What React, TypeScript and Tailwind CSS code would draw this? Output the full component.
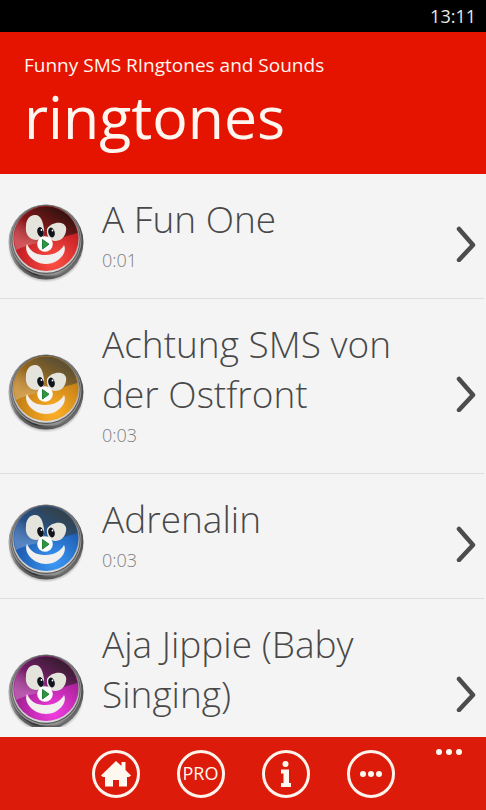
import React from 'react';

interface Ringtone {
  title: string;
  duration?: string;
  face: string;
  glow: string;
  shade: string;
}

const ringtones: Ringtone[] = [
  { title: 'A Fun One', duration: '0:01', face: '#c01a22', glow: '#ff5044', shade: '#35130f' },
  { title: 'Achtung SMS von der Ostfront', duration: '0:03', face: '#c07c14', glow: '#ffb128', shade: '#5a4f34' },
  { title: 'Adrenalin', duration: '0:03', face: '#1c58ac', glow: '#3c9af8', shade: '#34424a' },
  { title: 'Aja Jippie (Baby Singing)', face: '#a02090', glow: '#f53ce4', shade: '#381c30' },
];

interface FaceIconProps {
  id: string;
  tone: Ringtone;
}

const FaceIcon: React.FC<FaceIconProps> = ({ id, tone }) => (
  <svg viewBox="0 1 80 80" className="size-20" aria-hidden="true">
    <defs>
      <linearGradient id={`${id}-rim`} x1="0" y1="0" x2="1" y2="1">
        <stop offset="0" stopColor="#8c8c8c" />
        <stop offset="0.3" stopColor="#a8a8a8" />
        <stop offset="0.5" stopColor="#686868" />
        <stop offset="0.75" stopColor="#505050" />
        <stop offset="1" stopColor="#a0a0a0" />
      </linearGradient>
      <linearGradient id={`${id}-groove`} x1="0" y1="0" x2="1" y2="0">
        <stop offset="0" stopColor="#6c6c6c" />
        <stop offset="0.35" stopColor="#2c2c2c" />
        <stop offset="0.65" stopColor="#8c8c8c" />
        <stop offset="1" stopColor="#4a4a4a" />
      </linearGradient>
      <linearGradient id={`${id}-ring`} x1="0" y1="0" x2="0" y2="1">
        <stop offset="0" stopColor="#5a5a5a" />
        <stop offset="0.5" stopColor="#a4a4a4" />
        <stop offset="1" stopColor="#dcdcdc" />
      </linearGradient>
      <linearGradient id={`${id}-gloss`} x1="0.1" y1="0.8" x2="0.7" y2="0.1">
        <stop offset="0" stopColor="#ffffff" stopOpacity="0.25" />
        <stop offset="0.45" stopColor={tone.shade} stopOpacity="0.4" />
        <stop offset="1" stopColor={tone.shade} />
      </linearGradient>
      <radialGradient id={`${id}-face`} cx="0.62" cy="0.86" r="0.6">
        <stop offset="0" stopColor={tone.glow} />
        <stop offset="1" stopColor={tone.face} />
      </radialGradient>
      <radialGradient id={`${id}-shadow`}>
        <stop offset="0.8" stopColor="#000000" stopOpacity="0.5" />
        <stop offset="1" stopColor="#000000" stopOpacity="0" />
      </radialGradient>
      <clipPath id={`${id}-clip`}>
        <circle cx="38" cy="35.500" r="32" />
      </clipPath>
    </defs>
    <ellipse cx="38" cy="44" rx="38" ry="35.500" fill={`url(#${id}-shadow)`} />
    <circle cx="38" cy="39" r="37.500" fill={`url(#${id}-rim)`} />
    <circle cx="38" cy="38" r="36" fill={`url(#${id}-groove)`} />
    <circle cx="38" cy="37" r="35.500" fill="#949494" />
    <circle cx="38" cy="36.500" r="34.500" fill="#555555" />
    <circle cx="38" cy="36" r="33.800" fill={`url(#${id}-ring)`} />
    <circle cx="38" cy="35.500" r="32.500" fill={`url(#${id}-face)`} />
    <path
      d="M5 3h66v26C62 33 44 37 30 40C20 42 11 45 5 49Z"
      fill={`url(#${id}-gloss)`}
      clipPath={`url(#${id}-clip)`}
    />
    <path
      d="M26 12C33 11 35 19 36 26C37 33 34 37 28 37C20 36 17 30 18 23C18 17 21 13 26 12Z"
      fill="#e4e4dc"
    />
    <path d="M39 26C42 21 48 19 53 20C57 21 59 24 58 28C57 34 53 38 47 38C42 38 38 33 39 26Z" fill="#e4e4dc" />
    <path d="M19 41C23 50 30 52 38 52S53 48 56 42C60 50 50 61 38 61C25 61 15 49 19 41Z" fill="#f2f0ee" />
    <ellipse cx="32.500" cy="29" rx="3.200" ry="5" fill="#10141c" transform="rotate(-15 32.500 29)" />
    <ellipse cx="43.500" cy="29.500" rx="3.200" ry="5" fill="#10141c" transform="rotate(-15 43.500 29.500)" />
    <circle cx="33.500" cy="27" r="0.900" fill="#ffffff" />
    <circle cx="44.500" cy="27.500" r="0.900" fill="#ffffff" />
    <circle cx="37" cy="41" r="7.800" fill="#ffffff" />
    <path d="M34.500 36.500v9.500l6.500-4.800Z" fill="#2c9640" stroke="#24803a" strokeLinejoin="round" />
  </svg>
);

interface RingtoneRowProps {
  id: string;
  tone: Ringtone;
}

const RingtoneRow: React.FC<RingtoneRowProps> = ({ id, tone }) => (
  <li className="border-b border-[#dedede]">
    <button type="button" className="flex w-full items-center pt-5 pr-2 pb-1 pl-2 text-left">
      <FaceIcon id={id} tone={tone} />
      <div className="ml-3.5 min-w-0 flex-1 pb-5">
        <h2 className="text-[37px] leading-[50px] font-light text-[#484848]">{tone.title}</h2>
        <p className="min-h-[30px] pt-0.5 text-[18px] leading-7 font-light text-[#808080]">{tone.duration}</p>
      </div>
      <svg viewBox="0 0 20 36" className="ml-12 h-9 w-5" aria-hidden="true">
        <path d="M3 3L17 19L3 34" fill="none" stroke="#4c4c4c" strokeWidth="4.5" strokeLinecap="round" strokeLinejoin="round" />
      </svg>
    </button>
  </li>
);

interface BarButtonProps {
  label: string;
  children: React.ReactNode;
}

const BarButton: React.FC<BarButtonProps> = ({ label, children }) => (
  <button
    type="button"
    aria-label={label}
    className="flex size-12 items-center justify-center rounded-full border-3 border-[#fff4ec] text-[#fff8f0]"
  >
    {children}
  </button>
);

const App: React.FC = () => {
  return (
    <div className="flex h-screen flex-col bg-[#f4f4f4] font-['Open_Sans','Noto_Sans',sans-serif]">
      <div className="flex h-8 shrink-0 items-center justify-end bg-black pr-2.5 text-[18px] text-[#e8e8e8]">
        13:11
      </div>

      <header className="shrink-0 bg-[#e51400] px-6 pt-5 pb-5 text-[#fff6f0]">
        <p className="text-[19px] leading-[26px]">Funny SMS RIngtones and Sounds</p>
        <h1 className="text-[59px] leading-[76px]">ringtones</h1>
      </header>

      <main className="mb-2.5 min-h-0 flex-1 overflow-hidden">
        <ul className="mr-0.5">
          {ringtones.map((tone, index) => (
            <RingtoneRow key={tone.title} id={`face-${index}`} tone={tone} />
          ))}
        </ul>
      </main>

      <footer className="relative flex h-[73px] shrink-0 items-center justify-center gap-[37px] bg-[#dc1b0a]">
        <BarButton label="Home">
          <svg viewBox="0 0 30 26" className="h-[26px] w-[30px]" fill="currentColor" aria-hidden="true">
            <path d="M15 0L0 14.500L2 16H4V25.500H12V19H18V25.500H26V16H28L30 14.500L24.500 9V1H20.500V5Z" />
          </svg>
        </BarButton>
        <BarButton label="Pro">
          <span className="text-[18px]">PRO</span>
        </BarButton>
        <BarButton label="Info">
          <svg viewBox="0 0 12 28" className="h-7 w-3" fill="currentColor" aria-hidden="true">
            <circle cx="5.500" cy="4" r="3" />
            <path d="M1 9.500H9V23H11V27H1V23H3.500V13.500H1Z" />
          </svg>
        </BarButton>
        <BarButton label="Options">
          <svg viewBox="0 0 24 6" className="h-1.5 w-6" fill="currentColor" aria-hidden="true">
            <circle cx="4" cy="3" r="3" />
            <circle cx="12" cy="3" r="3" />
            <circle cx="20" cy="3" r="3" />
          </svg>
        </BarButton>
        <button type="button" aria-label="Show more" className="absolute top-3 right-6 text-[#fff8f0]">
          <svg viewBox="0 0 26 6" className="h-1.5 w-[26px]" fill="currentColor" aria-hidden="true">
            <circle cx="3" cy="3" r="3" />
            <circle cx="13" cy="3" r="3" />
            <circle cx="23" cy="3" r="3" />
          </svg>
        </button>
      </footer>
    </div>
  );
};

export default App;
